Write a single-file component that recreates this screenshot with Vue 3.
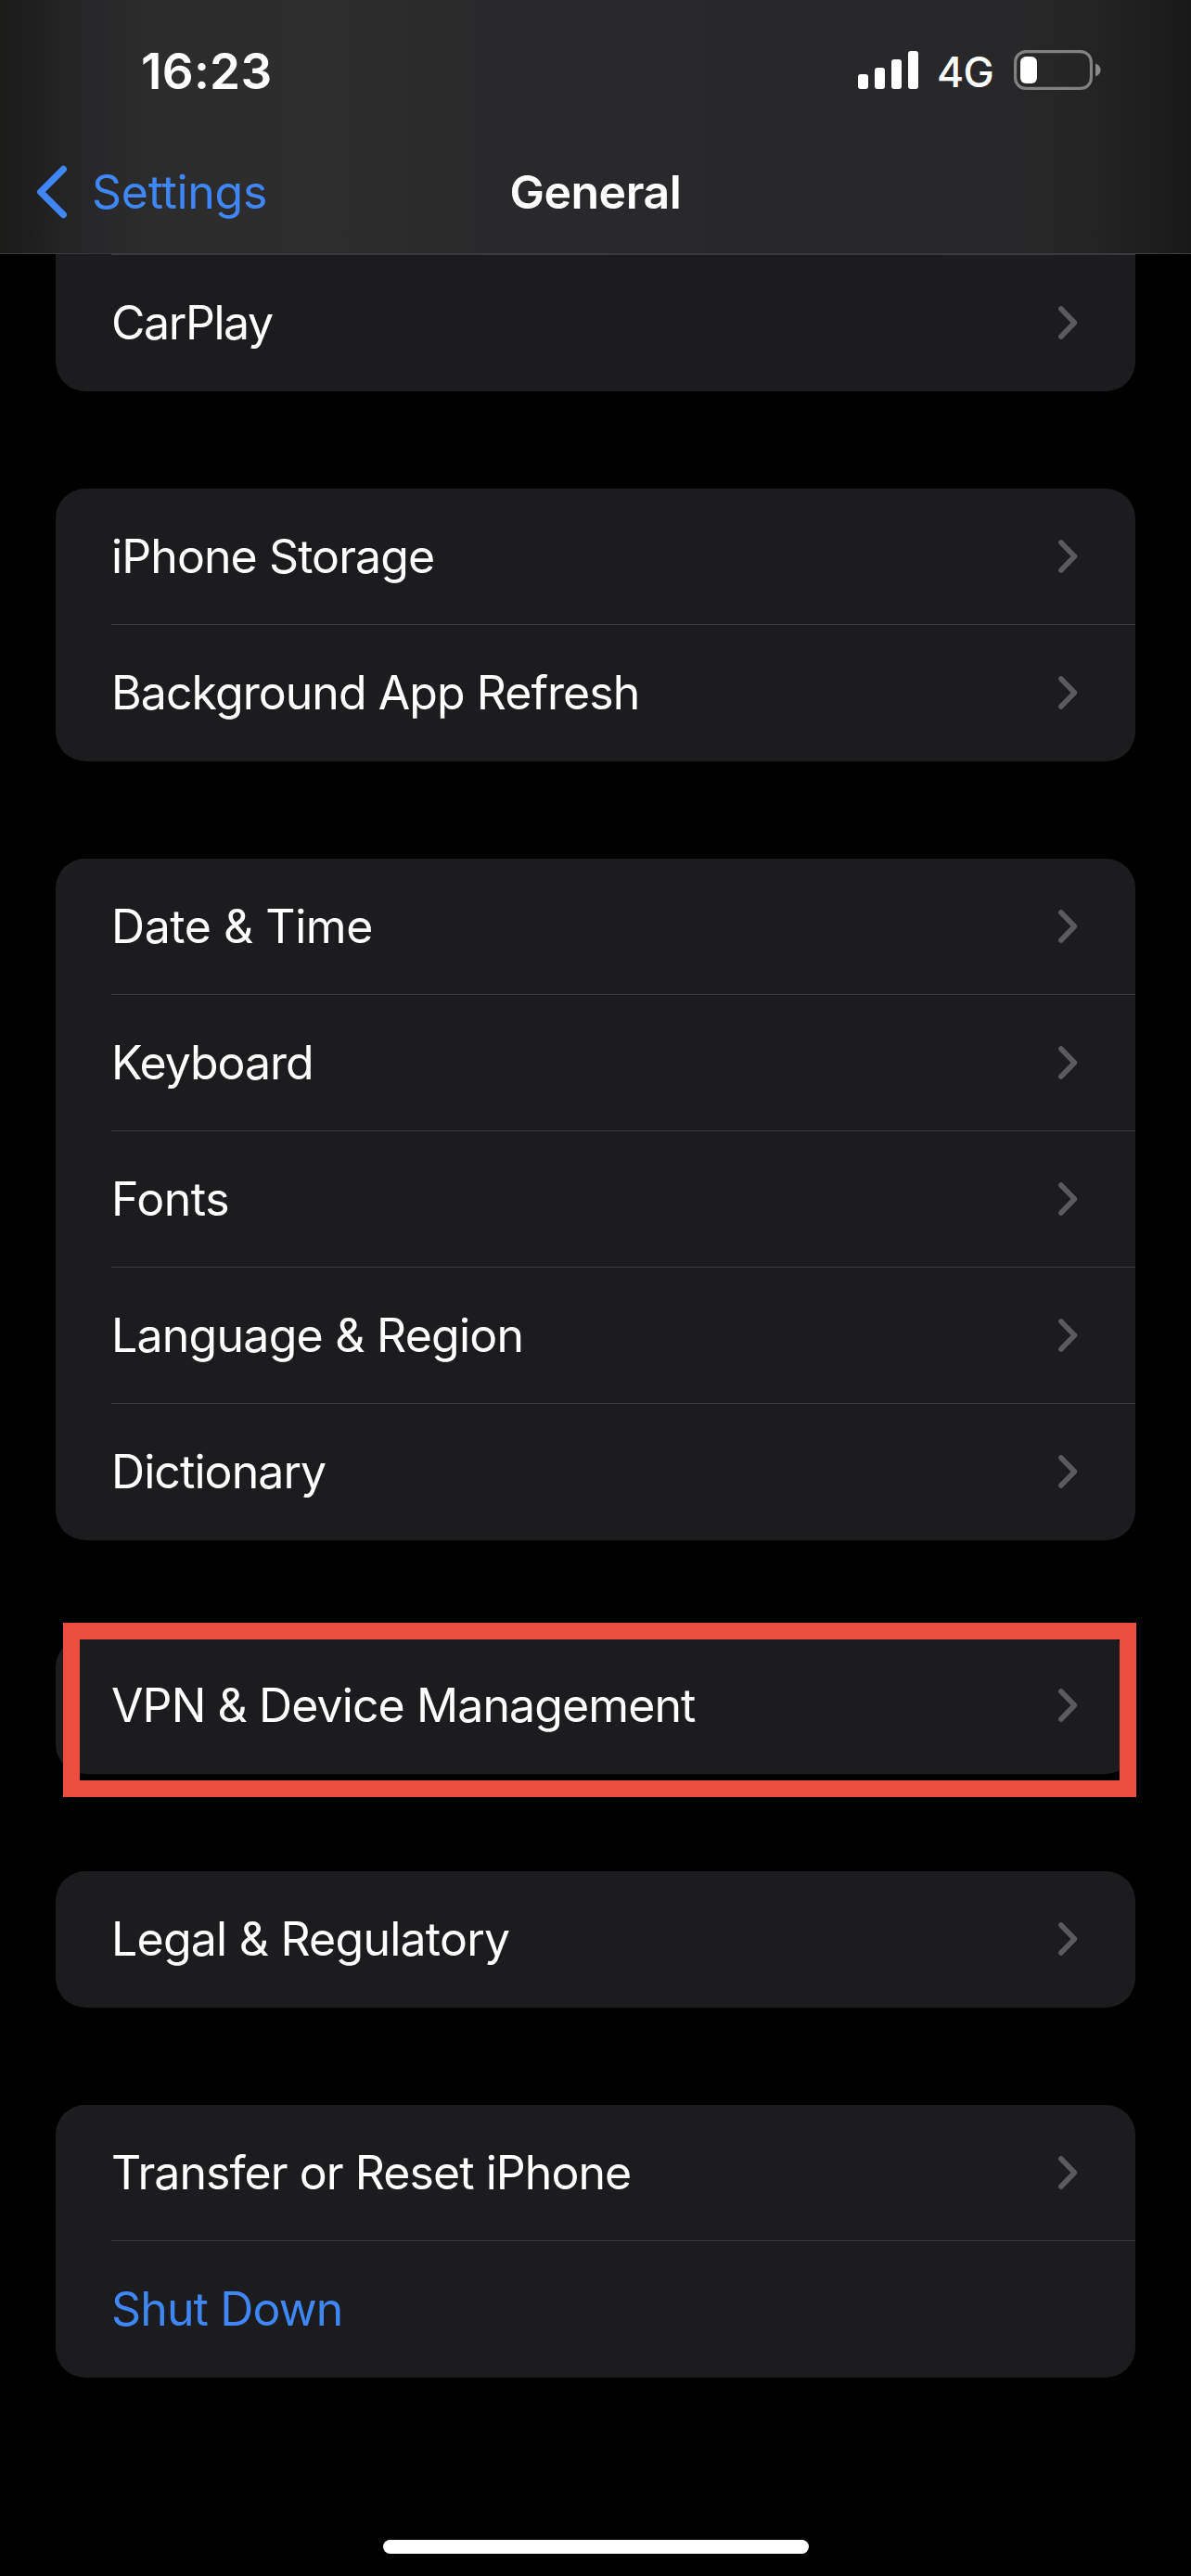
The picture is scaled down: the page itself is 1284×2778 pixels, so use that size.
<script setup>
// `tracking` is the letter spacing of each label, in pixels
const groups = [
  {
    id: 'carplay',
    continued: true,
    rows: [{ label: 'CarPlay', tracking: -1.43 }],
  },
  {
    id: 'storage',
    rows: [
      { label: 'iPhone Storage', tracking: -0.91 },
      { label: 'Background App Refresh', tracking: -0.94 },
    ],
  },
  {
    id: 'locale',
    rows: [
      { label: 'Date & Time', tracking: -0.45 },
      { label: 'Keyboard', tracking: -1.05 },
      { label: 'Fonts', tracking: -0.4 },
      { label: 'Language & Region', tracking: -0.76 },
      { label: 'Dictionary', tracking: -0.93 },
    ],
  },
  {
    id: 'vpn',
    highlighted: true,
    rows: [{ label: 'VPN & Device Management', tracking: -0.9 }],
  },
  {
    id: 'legal',
    rows: [{ label: 'Legal & Regulatory', tracking: -0.77 }],
  },
  {
    id: 'reset',
    rows: [
      { label: 'Transfer or Reset iPhone', tracking: -0.95 },
      { label: 'Shut Down', tracking: -0.87, action: true },
    ],
  },
]
</script>

<template>
  <div class="screen">
    <header class="header">
      <div class="status">
        <span class="time">16:23</span>
        <div class="indicators">
          <svg class="signal" width="65" height="41" viewBox="0 0 65 41" fill="#fff">
            <rect x="0" y="25" width="11" height="16" rx="3" />
            <rect x="18" y="18" width="11" height="23" rx="3" />
            <rect x="36" y="9" width="11" height="32" rx="3" />
            <rect x="54" y="0" width="11" height="41" rx="3" />
          </svg>
          <span class="network">4G</span>
          <svg class="battery" width="94" height="43" viewBox="0 0 94 43">
            <rect x="1.6" y="1.6" width="81.8" height="39.8" rx="11.5" fill="none" stroke="#818182" stroke-width="3.2" />
            <rect x="7" y="7" width="18" height="29" rx="6" fill="#fff" />
            <path d="M88 14.5c3.500 1.300 5.600 4 5.600 7s-2.100 5.700-5.600 7z" fill="#8b8b8c" />
          </svg>
        </div>
      </div>
      <nav class="nav">
        <a class="back">
          <svg width="34" height="58" viewBox="0 0 34 58" fill="none">
            <path d="M29.300 4.500 4.800 29 29.300 53.500" stroke="#3f86f8" stroke-width="7.400" stroke-linecap="round" stroke-linejoin="round" />
          </svg>
          <span>Settings</span>
        </a>
        <h1 class="title">General</h1>
      </nav>
    </header>

    <main class="list">
      <section
        v-for="group in groups"
        :key="group.id"
        class="card"
        :class="{ continued: group.continued, highlighted: group.highlighted }"
      >
        <div v-for="row in group.rows" :key="row.label" class="row" :class="{ action: row.action }">
          <span class="label" :style="{ letterSpacing: row.tracking + 'px' }">{{ row.label }}</span>
          <svg v-if="!row.action" class="chevron" width="22" height="38" viewBox="0 0 22 38" fill="none">
            <path d="M3.900 4 18.400 19 3.900 34" stroke="#5b5b5f" stroke-width="5.600" stroke-linecap="round" stroke-linejoin="round" />
          </svg>
        </div>
      </section>
    </main>

    <div class="home-indicator"></div>
  </div>
</template>

<style>
body {
  background: #000;
}
</style>

<style scoped>
.screen {
  display: flex;
  flex-direction: column;
  align-items: center;
  box-sizing: border-box;
  width: 1284px;
  height: 2778px;
  overflow: hidden;
  background: #000;
  color: #fff;
  font-family: Inter, "Liberation Sans", sans-serif;
  font-size: 50px;
  line-height: 60px;
}

.header {
  box-sizing: border-box;
  width: 100%;
  height: 274px;
  border-bottom: 1px solid #39393b;
  background: linear-gradient(
    90deg,
    #1c1c1b 0,
    #1d1d1d 22px,
    #222223 58px,
    #28282a 105px,
    #2c2c2d 160px,
    #2d2d2e 360px,
    #29292b 560px,
    #28282a 1090px,
    #242424 1170px,
    #1d1d1e 1250px,
    #19191a 1284px
  );
}

.status {
  display: flex;
  align-items: flex-start;
  justify-content: space-between;
  box-sizing: border-box;
  height: 141px;
  padding: 47px 97px 0 152px;
}

.time {
  font-size: 53px;
  font-weight: 600;
  letter-spacing: 0.3px;
}

.indicators {
  display: flex;
  align-items: flex-start;
}

.signal {
  margin-top: 8px;
}

.network {
  width: 83px;
  margin-top: 1px;
  margin-left: 20px;
  font-size: 44.5px;
  font-weight: 450;
  letter-spacing: -0.8px;
  white-space: nowrap;
}

.battery {
  margin-top: 7px;
}

.nav {
  display: grid;
  grid-template-columns: 549.5px auto 1fr;
  align-items: center;
  box-sizing: border-box;
  height: 132px;
  padding-bottom: 1px;
}

.back {
  display: flex;
  align-items: center;
  gap: 26px;
  padding-left: 39px;
  color: #3f86f8;
  letter-spacing: -0.3px;
}

.title {
  margin: 0;
  font-size: 50px;
  font-weight: 600;
  letter-spacing: -0.5px;
}

.list {
  display: flex;
  flex-direction: column;
  gap: 105px;
  width: 1164px;
}

.card {
  position: relative;
  border-radius: 32px;
  background: #1c1c1e;
}

.continued {
  border-radius: 0 0 32px 32px;
}

.row {
  display: flex;
  align-items: center;
  justify-content: space-between;
  box-sizing: border-box;
  height: 147px;
  margin-left: 60px;
  padding: 0 62px 1px 0;
  border-bottom: 1px solid #3b3b3d;
}

.row:last-child {
  border-bottom-color: transparent;
}

.continued .row {
  height: 148px;
  border-top: 1px solid #3b3b3d;
}

.action {
  color: #3f86f8;
}

.label {
  white-space: nowrap;
}

/* Frame laid over the card and slightly offset from its edges */
.highlighted::after {
  content: "";
  position: absolute;
  top: -16px;
  left: 8px;
  box-sizing: border-box;
  width: 1157px;
  height: 188px;
  border: 18px solid #eb4e3d;
}

.home-indicator {
  width: 459px;
  height: 15px;
  margin-top: 175px;
  border-radius: 8px;
  background: #fff;
}
</style>
